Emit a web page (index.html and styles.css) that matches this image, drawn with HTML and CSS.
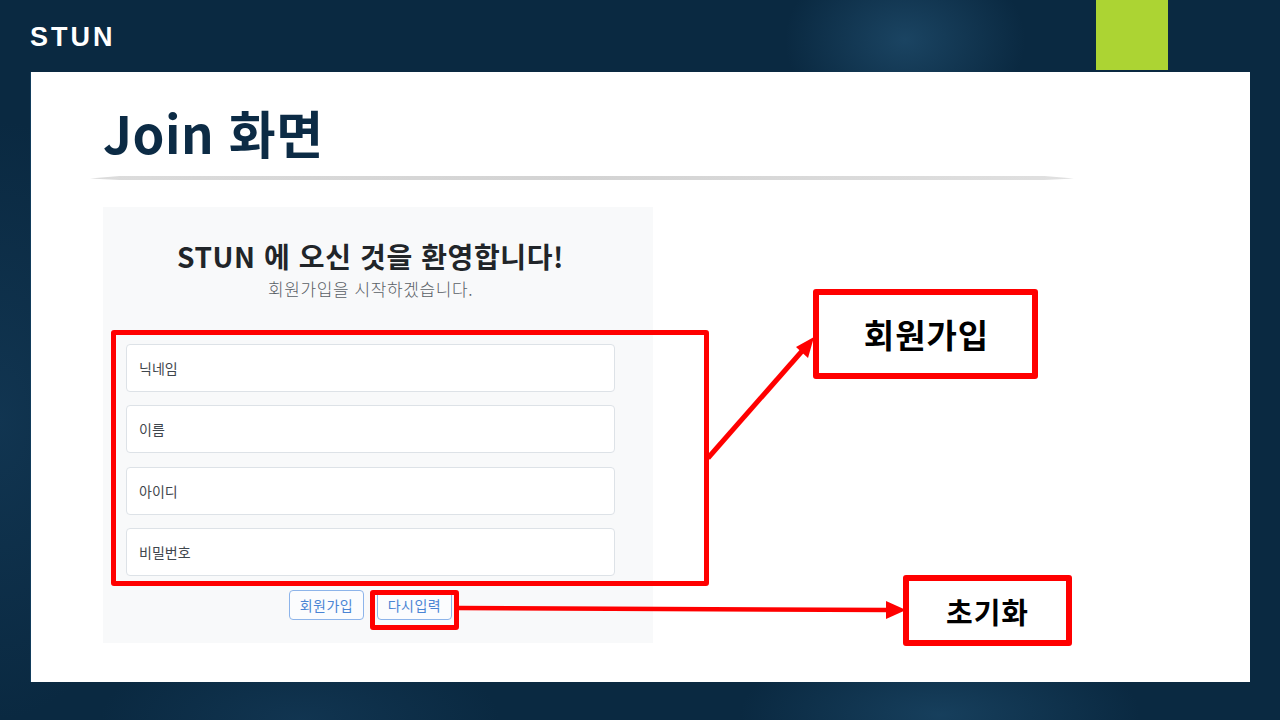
FILE: index.html
```html
<!DOCTYPE html>
<html lang="ko">
<head>
<meta charset="utf-8">
<title>Join 화면</title>
<link rel="stylesheet" href="styles.css">
</head>
<body>
<div class="slide">
  <header class="topbar">
    <div class="logo">STUN</div>
    <div class="accent"></div>
  </header>
  <main class="sheet">
    <h1 class="title">Join 화면</h1>
    <div class="rule"></div>
    <section class="join">
      <h2 class="join-title">STUN 에 오신 것을 환영합니다!</h2>
      <p class="join-sub">회원가입을 시작하겠습니다.</p>
      <div class="fields">
        <div class="field">닉네임</div>
        <div class="field">이름</div>
        <div class="field">아이디</div>
        <div class="field">비밀번호</div>
      </div>
      <div class="actions">
        <button class="btn">회원가입</button>
        <button class="btn">다시입력</button>
      </div>
    </section>
  </main>

  <div class="mark mark-fields"></div>
  <div class="mark mark-reset"></div>
  <div class="callout callout-join">회원가입</div>
  <div class="callout callout-reset">초기화</div>
  <svg class="arrows" width="1280" height="720" viewBox="0 0 1280 720">
    <line x1="708" y1="458" x2="803" y2="350" stroke="#ff0000" stroke-width="5"/>
    <polygon points="814,337 796,347 808,358" fill="#ff0000"/>
    <line x1="458" y1="608" x2="888" y2="610" stroke="#ff0000" stroke-width="4.5"/>
    <polygon points="906,610 886,601 886,619" fill="#ff0000"/>
  </svg>
</div>
</body>
</html>
```

FILE: styles.css
```css
* { box-sizing: border-box; }
html, body { margin: 0; padding: 0; }
body {
  width: 1280px;
  height: 720px;
  overflow: hidden;
  font-family: "Noto Sans CJK KR", "Noto Sans", sans-serif;
}
.slide {
  position: relative;
  width: 1280px;
  height: 720px;
  background:
    radial-gradient(ellipse 120px 90px at 905px 40px, rgba(40, 90, 125, 0.55), rgba(40, 90, 125, 0) 100%),
    radial-gradient(ellipse 200px 80px at 940px 715px, rgba(35, 85, 120, 0.5), rgba(35, 85, 120, 0) 100%),
    radial-gradient(ellipse 160px 300px at 0px 420px, rgba(30, 75, 110, 0.35), rgba(30, 75, 110, 0) 100%),
    radial-gradient(ellipse 200px 80px at 300px 720px, rgba(30, 75, 110, 0.35), rgba(30, 75, 110, 0) 100%),
    #0a2941;
}
.topbar {
  height: 72px;
  display: flex;
  justify-content: space-between;
  align-items: flex-start;
  padding: 0 112px 0 30px;
}
.logo {
  margin-top: 21px;
  font-family: "Liberation Sans", Arial, sans-serif;
  font-weight: 700;
  font-size: 27px;
  line-height: 32px;
  letter-spacing: 3px;
  color: #ffffff;
}
.accent {
  width: 72px;
  height: 70px;
  background: #acd433;
}
.sheet {
  margin: 0 30px;
  height: 610px;
  background: #ffffff;
  padding-top: 29px;
  border-left: 1px solid #123d5c;
}
.title {
  margin: 0 0 0 72px;
  font-family: "Noto Sans CJK KR", sans-serif;
  font-weight: 700;
  font-size: 51px;
  line-height: 62px;
  color: #0c2b45;
  letter-spacing: 0.5px;
}
.rule {
  margin: 13px 0 0 59px;
  width: 984px;
  height: 4px;
  background: linear-gradient(to right, #dcdcdc, #d3d3d3 50%, #e0e0e0);
  clip-path: polygon(0 60%, 3% 0, 97% 0, 100% 60%, 97% 100%, 3% 100%);
}
.join {
  margin: 27px 0 0 72px;
  width: 550px;
  height: 436px;
  background: #f8f9fa;
  padding: 31px 38px 0 23px;
  display: flex;
  flex-direction: column;
  align-items: center;
}
.join-title {
  margin: 0;
  font-weight: 700;
  font-size: 28px;
  line-height: 36px;
  color: #212529;
  letter-spacing: 0.6px;
}
.join-sub {
  margin: 3px 0 0;
  font-size: 17px;
  line-height: 24px;
  color: #5a6066;
  font-weight: 300;
  letter-spacing: 0.6px;
}
.fields {
  margin-top: 43px;
  width: 100%;
  display: flex;
  flex-direction: column;
  gap: 13.4px;
}
.field {
  height: 48px;
  background: #ffffff;
  border: 1px solid #dde2e7;
  border-radius: 4px;
  padding: 0 12px;
  display: flex;
  align-items: center;
  font-size: 14px;
  color: #3f464d;
}
.actions {
  margin-top: 14px;
  display: flex;
  gap: 13px;
}
.btn {
  width: 75px;
  height: 30px;
  background: #fbfcfe;
  border: 1px solid #8db4ea;
  border-radius: 4px;
  font-family: "Noto Sans CJK KR", sans-serif;
  font-size: 14px;
  letter-spacing: 0.5px;
  color: #4a84d4;
  padding: 0;
}
.mark {
  position: absolute;
  border: 5px solid #ff0000;
  border-radius: 3px;
}
.mark-fields { left: 111px; top: 330px; width: 598px; height: 256px; }
.mark-reset { left: 370px; top: 590px; width: 89px; height: 40px; }
.callout {
  position: absolute;
  background: #ffffff;
  border: 6px solid #ff0000;
  border-radius: 3px;
  display: flex;
  align-items: center;
  justify-content: center;
  font-family: "Noto Sans CJK KR", sans-serif;
  font-weight: 700;
  color: #000000;
}
.callout-join { left: 813px; top: 289px; width: 225px; height: 90px; font-size: 33px; letter-spacing: 1px; padding-left: 2px; }
.callout-reset { left: 903px; top: 575px; width: 169px; height: 71px; font-size: 29px; letter-spacing: 1px; }
.arrows {
  position: absolute;
  left: 0;
  top: 0;
  pointer-events: none;
}
```
